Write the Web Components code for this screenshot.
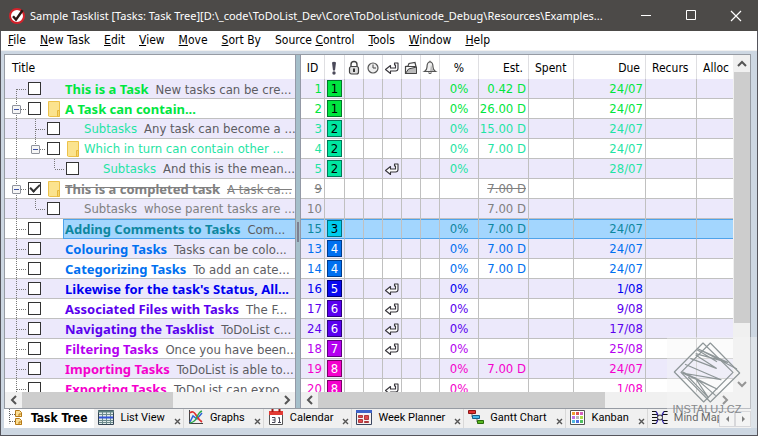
<!DOCTYPE html>
<html lang="en">
<head>
<meta charset="utf-8">
<title>Sample Tasklist</title>
<style>
html, body { margin: 0; height: 100%; overflow: hidden; }
body { font: 13px/19px "DejaVu Sans Condensed", Tahoma, sans-serif; color: #000; }
</style>
</head>
<body>
<app-window>
  <title-bar slot="title">Sample Tasklist [Tasks: Task Tree][D:\_code\ToDoList_Dev\Core\ToDoList\unicode_Debug\Resources\Examples...</title-bar>
  <menu-bar slot="menu"></menu-bar>
  <split-view slot="main">
    <task-tree slot="left"></task-tree>
    <scroll-bar slot="left" size="59"></scroll-bar>
    <task-columns slot="right"></task-columns>
    <scroll-bar slot="right" size="72"></scroll-bar>
    <scroll-bar slot="side" vertical size="83"></scroll-bar>
  </split-view>
  <view-tabs slot="tabs">
    <view-tab icon="tree" active>Task Tree</view-tab>
    <view-tab icon="list">List View</view-tab>
    <view-tab icon="graph">Graphs</view-tab>
    <view-tab icon="calendar">Calendar</view-tab>
    <view-tab icon="week">Week Planner</view-tab>
    <view-tab icon="gantt">Gantt Chart</view-tab>
    <view-tab icon="kanban">Kanban</view-tab>
    <view-tab icon="mind">Mind Map</view-tab>
  </view-tabs>
  <brand-mark slot="mark">INSTALUJ.CZ</brand-mark>
</app-window>

<script>
const COLORS = {
  1: ['#00e640', '#00e640', '#007a2a', '#000'],
  2: ['#1fe4a4', '#00e6a0', '#007a58', '#000'],
  3: ['#0d87a0', '#00ccec', '#00707e', '#000'],
  4: ['#0070f0', '#0070f0', '#003c8c', '#fff'],
  5: ['#0000f0', '#0a0af0', '#000078', '#fff'],
  6: ['#5a00ee', '#5a00f0', '#2c0080', '#fff'],
  7: ['#b400f0', '#b400f0', '#5c0080', '#fff'],
  8: ['#f400cc', '#f400cc', '#7a0068', '#fff'],
  0: ['#808080']
};

/* g: gutter cells. s start, t tee, e expander, v line, l last, x last with expander */
const TASKS = [
  { id: 1, g: 's', p: 1, t: 'This is a Task', c: 'New tasks can be cre...', pc: '0%', est: '0.42 D', due: '24/07' },
  { id: 2, g: 'e', p: 1, t: 'A Task can contain...', c: '', folder: 1, pc: '0%', est: '26.00 D', due: '24/07' },
  { id: 3, g: 'vt', p: 2, t: 'Subtasks', c: 'Any task can become a ...', pc: '0%', est: '15.00 D', due: '24/07' },
  { id: 4, g: 'vx', p: 2, t: 'Which in turn can contain other ...', c: '', folder: 1, pc: '0%', est: '7.00 D', due: '24/07' },
  { id: 5, g: 'v l', p: 2, t: 'Subtasks', c: 'And this is the mean...', ret: 1, pc: '0%', due: '28/07' },
  { id: 9, g: 'e', p: 0, t: 'This is a completed task', c: 'A task ca...', folder: 1, done: 1, est: '7.00 D' },
  { id: 10, g: 'vl', p: 0, t: 'Subtasks', c: 'whose parent tasks are ...', est: '7.00 D' },
  { id: 15, g: 't', p: 3, t: 'Adding Comments to Tasks', c: 'Com...', sel: 1, pc: '0%', est: '7.00 D', due: '24/07' },
  { id: 13, g: 't', p: 4, t: 'Colouring Tasks', c: 'Tasks can be colo...', pc: '0%', est: '7.00 D', due: '24/07' },
  { id: 14, g: 't', p: 4, t: 'Categorizing Tasks', c: 'To add an cate...', pc: '0%', est: '7.00 D', due: '24/07' },
  { id: 16, g: 't', p: 5, t: "Likewise for the task's Status, All...", c: '', ret: 1, pc: '0%', due: '1/08' },
  { id: 17, g: 't', p: 6, t: 'Associated Files with Tasks', c: 'The F...', ret: 1, pc: '0%', due: '9/08' },
  { id: 24, g: 't', p: 6, t: 'Navigating the Tasklist', c: 'ToDoList c...', ret: 1, pc: '0%', due: '17/08' },
  { id: 18, g: 't', p: 7, t: 'Filtering Tasks', c: 'Once you have been...', ret: 1, pc: '0%', due: '25/08' },
  { id: 19, g: 't', p: 8, t: 'Importing Tasks', c: 'ToDoList is able to...', pc: '0%', est: '7.00 D', due: '24/07' },
  { id: 20, g: 't', p: 8, t: 'Exporting Tasks', c: 'ToDoList can expo...', ret: 1, pc: '0%', due: '1/08' }
];

const grid = (n, f) => Array.from({ length: n }, (_, i) => f(i)).join('');
const ICONS = {
  app: `<circle cx="8" cy="8" r="7" fill="#fff" stroke="#d3222b" stroke-width="2"/><path d="M4 8.2l3 3.4 6.6-9.4" fill="none" stroke="#2a1512" stroke-width="2.4"/>`,
  bang: `<path d="M6 2.5q2-1.5 4 0l-1 8H7z" fill="#4b4a5a"/><circle cx="8" cy="13" r="1.7" fill="#4b4a5a"/>`,
  lock: `<path d="M5 7V4.5q0-3 3-3t3 3V7" fill="none" stroke="#444" stroke-width="1.4"/><rect x="3.5" y="6.5" width="9" height="7.5" rx="2" fill="#ddd" stroke="#444" stroke-width="1.2"/><path d="M8 8.5v3.5" stroke="#333" stroke-width="2"/>`,
  clock: `<circle cx="8" cy="8" r="5" fill="#eee" stroke="#555" stroke-width="1.2"/><path d="M8 4.5V8h3" fill="none" stroke="#444"/>`,
  ret: `<path d="M10.500 3h3.500v5.500q0 2.500-2.500 2.500H6.500v2.500L1.500 9.500 6.500 5.500V8H11.500V5H10.500z" fill="#fafafa" stroke="#38363c" stroke-width="1.100" stroke-linejoin="round"/>`,
  folder: `<path d="M2.5 13.5V6.5L5 6l1-2.500 6-1 1 4v7z" fill="#fafafa" stroke="#444" stroke-width="1.2"/><path d="M2.5 13.5l3-4.5 8-2v6.5z" fill="#bbb" stroke="#444"/><path d="M3 6.5h10" stroke="#444"/>`,
  bell: `<path d="M8 2q3 0 3 5 0 3 2.500 4.500h-11Q5 10 5 7q0-5 3-5z" fill="#f0f0f0" stroke="#555" stroke-width="1.2"/><path d="M9 4.500q1 4 3 6.500H8z" fill="#bbb"/><path d="M6.5 12.5q1.500 2 3 0M8 2V.8" fill="none" stroke="#555" stroke-width="1.2"/>`,
  note: `<path d="M1.500.5h11V10l-.5 2v3.500H2.500L1.500 15z" fill="#fbe38e" stroke="#edc24a"/><path d="M10.500 15.500V9.500h2v6z" fill="#f8d66a" stroke="#e6b93c"/>`,
  tree: `<path d="M.5 0v14.500M1 5.500h5M1 12.500h5" stroke="#666" stroke-dasharray="1 1"/><g fill="#fcdf94" stroke="#b67a18"><path d="M6.500 1.500h4l2 2v4h-6z"/><path d="M6.500 9.500h4l2 2v4h-6z"/><path d="M10 5h2.500v2.500H10zM10 13h2.500v2.500H10z"/></g>`,
  list: `<path d="M.5 1.500h15v14H.5z" fill="#dfeaea" stroke="#345"/><path d="M0 2.500h16" stroke="#5a8080" stroke-width="2"/><path d="M1 5.500h14M1 11.500h14M1 13.500h14M4.500 3v12M8.500 3v12M12.500 3v12" stroke="#6d8a8c"/><path d="M1 8.500h14" stroke="#3355d8" stroke-width="2"/>`,
  graph: `<path d="M1.500 1v13.500H15" fill="none" stroke="#444"/><path d="M2 13L5 7l4 3 5-6" fill="none" stroke="#2c63d8" stroke-width="1.500"/><path d="M2 4q3-3 6 2t6 7" fill="none" stroke="#e03030" stroke-width="1.700"/><path d="M2 14q5-1 7-6t5-6" fill="none" stroke="#2fa84c" stroke-width="1.400"/>`,
  calendar: `<path d="M1.500 2.500h13v13h-13z" fill="#fff" stroke="#555"/><path d="M1 2h14v4H1z" fill="#e23a34"/><path d="M4.500 0v3M11.500 0v3" stroke="#a01814" stroke-width="2"/><path d="M4 8.500h3v5H4M4.500 11H7M10 9l1.500-.5v5M10 13.500h3" fill="none" stroke="#445"/>`,
  week: `<path d="M.5 1.500h15v14H.5z" fill="#f6f2f2" stroke="#3a4660"/><path d="M0 1h16v3H0z" fill="#3e62c8"/><g fill="#e0484c" stroke="#9c2026" stroke-width=".8"><path d="M2.500 6.500h4v2h-4zM8.500 6.500h4v4h-4zM2.500 10.500h4v3h-4zM8.500 12.500h4v1h-4z"/></g>`,
  gantt: `<path d="M4 4v4h3M9 9v4h3" fill="none" stroke="#666"/><path d="M.5 1.500h7v3h-7z" fill="#e03030" stroke="#8c1414"/><path d="M4.500 6.500h7v3h-7z" fill="#48b8ea" stroke="#14608c"/><path d="M9.500 11.500h6v3h-6z" fill="#58b820" stroke="#2a6c0c"/>`,
  kanban: `<path d="M.5 1.500h14v14H.5z" fill="#fff" stroke="#555"/>` + grid(9, i => `<rect x="${2 + i % 3 * 4}" y="${3 + (i / 3 | 0) * 4}" width="3" height="3" fill="${['#f0a030', '#e05050', '#d860c0', '#c070e0', '#b8b8b8', '#b0dc50', '#50b8e0', '#5070e0', '#50c060'][i]}"/>`),
  mind: `<path d="M0 2.500h4M0 5.500h5M0 8.500h5M0 11.500h5M0 14.500h4M12 2.500h4M11 5.500h5M11 11.500h5M12 14.500h4" stroke="#111"/><path d="M4 2.500q2 2 2 6t-2 6M12 2.500q-2 2-2 6t2 6" fill="none" stroke="#3426a0" stroke-width="1.300"/><circle cx="8" cy="8.500" r="2.500" fill="#eee" stroke="#333"/>`,
  min: `<path d="M3 7.500h10" stroke="#fff"/>`,
  max: `<path d="M3.500 2.500h9v9h-9z" fill="none" stroke="#fff" stroke-width="1"/>`,
  close: `<path d="M3 3l10 10M13 3L3 13" stroke="#fff" stroke-width="1.200"/>`,
  cross: `<path d="M5 8l5 5M10 8l-5 5" stroke="#555" stroke-width="1.400"/>`,
  left: `<path d="M10 4L6 8l4 4" fill="none" stroke="#555" stroke-width="2"/>`,
  right: `<path d="M6 4l4 4-4 4" fill="none" stroke="#555" stroke-width="2"/>`,
  up: `<path d="M4 10l4-4 4 4" fill="none" stroke="#555" stroke-width="2"/>`,
  down: `<path d="M4 6l4 4 4-4" fill="none" stroke="#555" stroke-width="2"/>`,
  prev: `<path d="M9 4v6L6 7z" fill="#333"/>`,
  next: `<path d="M6 4l3 3-3 3z" fill="#333"/>`
};
const svg = name => `<svg width="16" height="16" viewBox="0 0 16 16" aria-hidden="true">${ICONS[name]}</svg>`;

const define = (name, render) => customElements.define(name, class extends HTMLElement {
  connectedCallback() {
    if (!this.shadowRoot) this.attachShadow({ mode: 'open' }).innerHTML = render(this);
  }
});

const RESET = `:host,*{box-sizing:border-box} svg{display:block;flex:none} button{appearance:none;border:0;margin:0;padding:0;background:none;font:inherit;color:inherit}`;

define('app-window', () => `<style>${RESET}
  :host{display:flex;flex-direction:column;height:100vh;position:relative;background:#cdd7e2;
    border:solid #55555c;border-width:0 1px 1px}
  main{flex:1 1 0;min-height:0;display:flex;flex-direction:column;padding:3px 6px 7px 3px}
  ::slotted([slot=main]){flex:1 1 0;min-height:0}
</style>
<slot name="title"></slot><slot name="menu"></slot>
<main><slot name="main"></slot><slot name="tabs"></slot></main><slot name="mark"></slot>`);

define('title-bar', () => `<style>${RESET}
  :host{display:flex;flex:none;height:31px;align-items:center;background:#4c4a48;color:#fff;
    margin:0 -1px;padding-left:9px;font:11px/31px "Noto Sans","Segoe UI",sans-serif}
  h1{flex:1;min-width:0;margin:0 0 0 5px;font:inherit;white-space:nowrap;overflow:hidden}
  button{width:45px;height:31px;display:grid;place-items:center}
</style>${svg('app')}<h1><slot></slot></h1>
<button aria-label="Minimize">${svg('min')}</button><button aria-label="Maximize">${svg('max')}</button><button aria-label="Close">${svg('close')}</button>`);

define('menu-bar', () => `<style>${RESET}
  :host{display:flex;flex:none;height:20px;background:#fff;border-bottom:1px solid #f0f0f0;font-size:12px}
  button{padding:0 7px;line-height:19px;white-space:nowrap}
</style>` + ['_File', '_New Task', '_Edit', '_View', '_Move', '_Sort By', 'Source _Control', '_Tools', '_Window', '_Help']
  .map(t => `<button>${t.replace(/_(.)/, '<u>$1</u>')}</button>`).join(''));

define('split-view', () => `<style>${RESET}
  :host{display:flex;border:1px solid #969ba3;background:#fff}
  .pane{display:flex;flex-direction:column;min-width:0;min-height:0}
  .left{flex:290 1 0}
  .right{flex:432 1 0}
  .bar{flex:none;width:6px;background:#a5bfca;border:solid #9499a6;border-width:0 1px;display:grid;place-items:center}
  .bar i{width:2px;height:20px;background:#7c8092}
  .side{flex:none;width:17px;padding:0 0 16px 1px;display:flex;flex-direction:column;background:#f0f0f0}
  ::slotted(task-tree),::slotted(task-columns){flex:1 1 0;min-height:0;overflow:hidden}
  ::slotted([slot=side]){flex:1}
</style>
<div class="pane left"><slot name="left"></slot></div>
<div class="bar"><i></i></div>
<div class="pane right"><slot name="right"></slot></div>
<div class="side"><slot name="side"></slot></div>`);

define('scroll-bar', el => {
  const v = el.hasAttribute('vertical');
  return `<style>${RESET}
  :host{display:flex;flex:none;flex-direction:${v ? 'column' : 'row'};background:#f0f0f0;${v ? 'width' : 'height'}:16px}
  button{flex:none;width:${v ? 16 : 17}px;height:${v ? 17 : 16}px;display:grid;place-items:center}
  .track{flex:1;display:flex;flex-direction:${v ? 'column' : 'row'}}
  .thumb{flex:0 0 ${el.getAttribute('size')}%;background:#cdcdcd}
</style><button aria-label="Scroll back">${svg(v ? 'up' : 'left')}</button><div class="track"><div class="thumb"></div></div><button aria-label="Scroll forward">${svg(v ? 'down' : 'right')}</button>`;
});

define('tree-gutter', el => {
  const c = el.getAttribute('kind');
  const ex = c === 'e' || c === 'x';
  const y = { s: [10, 20], t: [0, 20], e: [0, 20], v: [0, 20], l: [0, 10], x: [0, 10] }[c];
  return `<style>${RESET}
  :host{display:grid;flex:none;width:19px;height:20px}
  svg,button{grid-area:1/1}
  button{width:9px;height:9px;margin:6px 0 0 5px;border:1px solid #8f939c;border-radius:1px;background:#f6f6f6;display:grid;place-items:center}
  button i{width:5px;height:1px;background:#3a50a8}
</style><svg width="19" height="20" viewBox="0 0 19 20" fill="none" stroke="#777" stroke-dasharray="1 1">${y ? `<path d="M9.500 ${y[0]}V${y[1]}"/>` : ''}${y && c !== 'v' ? '<path d="M10 10.500h9"/>' : ''}</svg>${ex ? '<button aria-label="Collapse"><i></i></button>' : ''}`;
});

define('tree-row', el => {
  const t = TASKS[el.dataset.index];
  const lead = t.g.length === 1;
  return `<style>${RESET}
  :host{display:flex;height:20px;padding-left:2px;background:${el.dataset.index % 2 ? '#fff' : '#ece9fb'};
    border-bottom:1px solid #c0c0c0;white-space:nowrap;line-height:20px}
  input{appearance:none;flex:none;width:13px;height:13px;margin:3px 0 0 2px;border:1px solid #333;background:#fff;display:grid;place-items:center}
  input:checked::after{content:"";width:8px;height:4px;margin-top:-3px;border:solid #333;border-width:0 0 2px 2px;transform:rotate(-45deg)}
  .icon{flex:none;width:22px;padding:2px 0 0 6px;overflow:hidden}
  label{flex:1;min-width:0;height:20px;overflow:hidden;padding-left:2px;color:${COLORS[t.p][0]};${t.done ? 'text-decoration:line-through;' : ''}}
  label.sel{background:#a3d6fe;border:solid #4ea3ea;border-width:1px 0 1px 1px;padding-left:1px;line-height:18px}
  b{font-family:"Noto Sans",Tahoma,sans-serif}
  span{margin-left:7px;color:${t.p ? '#5c5c62' : '#808080'}}
</style>
${[...t.g].map(c => `<tree-gutter kind="${c}"></tree-gutter>`).join('')}
<input type="checkbox" id="c"${t.done ? ' checked' : ''}><div class="icon">${t.folder ? svg('note') : ''}</div>
<label for="c"${t.sel ? ' class="sel"' : ''}>${lead ? `<b>${t.t}</b>` : t.t}${t.c ? `<span>${t.c}</span>` : ''}</label>`;
});

define('task-tree', () => `<style>${RESET}
  :host{display:block}
  header{height:24px;padding-left:7px;line-height:26px;font-size:12px}
</style><header>Title</header>` + TASKS.map((t, i) => `<tree-row data-index="${i}"></tree-row>`).join(''));

define('task-columns', () => {
  const cols = [24, 20, 19, 19, 19, 19, 19, 39, 50, 45, 72, 51];
  const head = [['ID', 'c'], [svg('bang'), 'i', 'Priority'], [svg('lock'), 'i', 'Lock'], [svg('clock'), 'i', 'Time'], [svg('ret'), 'i', 'Dependency'], [svg('folder'), 'i', 'File'], [svg('bell'), 'i', 'Reminder'],
    ['%', 'c'], ['Est.', 'r'], ['Spent', ''], ['Due', 'r'], ['Recurs', ''], ['Alloc', '']];
  const row = (t, i) => {
    const c = COLORS[t.p];
    const pri = t.p ? `<span class="pri" style="background:${c[1]};border-color:${c[2]};color:${c[3]}">${t.p}</span>` : '';
    return `<tr class="${i % 2 ? '' : 'alt'}${t.sel ? ' sel' : ''}${t.done ? ' done' : ''}" style="color:${c[0]}"><td class="r">${t.id}</td><td>${pri}</td><td></td><td></td><td class="i">${t.ret ? svg('ret') : ''}</td><td></td><td></td><td class="c">${t.pc || ''}</td><td class="r">${t.est || ''}</td><td></td><td class="r">${t.due || ''}</td><td></td><td></td></tr>`;
  };
  return `<style>${RESET}
  :host{display:block}
  table{width:100%;table-layout:fixed;border-collapse:separate;border-spacing:0}
  th{height:24px;padding:2px 0 0 6px;font-weight:normal;font-size:12px;line-height:20px;text-align:left;border-right:1px solid #dfdfe2;white-space:nowrap;overflow:hidden}
  td{height:20px;padding:0;line-height:19px;border:solid #c0c0c0;border-width:0 1px 1px 0;white-space:nowrap;overflow:hidden}
  th:last-child,td:last-child{border-right:0}
  .alt{background:#ece9fb}
  .c{text-align:center;padding-left:0}
  td.r{text-align:right;padding-right:2px}
  th.r{text-align:right;padding:2px 5px 0 0}
  th.i{padding-left:1px}
  td.i{padding-left:1px}
  .sel{background:#a3d6fe}
  .sel td{border-bottom-color:#4ea3ea;box-shadow:inset 0 1px #4ea3ea}
  .done td{text-decoration:line-through}
  .pri{display:block;width:15px;height:17px;margin-left:2px;border:1px solid;text-align:center;line-height:15px}
</style><table><colgroup>${cols.map(w => `<col style="width:${w}px">`).join('')}<col></colgroup>
<thead><tr>${head.map(h => `<th class="${h[1]}"${h[2] ? ` aria-label="${h[2]}"` : ''}>${h[0]}</th>`).join('')}</tr></thead><tbody>${TASKS.map(row).join('')}</tbody></table>`;
});

define('view-tabs', () => `<style>${RESET}
  :host{display:flex;flex:none;height:19px;background:#f0f0f0}
  nav{flex:1;min-width:0;display:flex;overflow:hidden}
  button{width:16px;height:16px;margin-top:2px;border:1px solid #c4c4c8;background:#f4f4f4;overflow:hidden}
</style><nav><slot></slot></nav><button aria-label="Previous tabs">${svg('prev')}</button><button aria-label="Next tabs">${svg('next')}</button>`);

define('view-tab', el => {
  const on = el.hasAttribute('active');
  return `<style>${RESET}
  :host{display:flex;flex:none;height:19px;white-space:nowrap;
    ${on ? 'background:#fff;font-weight:bold;font-size:12px;padding-right:7px' : 'border-right:1px solid #d8d8d8;font-size:11px;font-family:Roboto,"Segoe UI",sans-serif'}}
  .tab{display:flex;gap:6px;padding-left:${on ? 5 : 4}px;line-height:${on ? 19 : 17}px}
  .x{margin-left:5px;width:13px;overflow:hidden}
</style><button class="tab">${svg(el.getAttribute('icon'))}<slot></slot></button>${on ? '' : `<button class="x" aria-label="Close tab">${svg('cross')}</button>`}`;
});

define('brand-mark', () => `<style>${RESET}
  :host{position:absolute;right:0;bottom:7px;width:90px;height:91px;display:flex;flex-direction:column;align-items:center;
    padding:4px 10px 0 0;background:rgba(244,244,244,.4);pointer-events:none;
    color:#85888c;font:11px/12px "Liberation Sans",Arial,sans-serif}
</style><svg width="68" height="62" viewBox="40 34 204 186" fill="none" stroke="#8e9698" stroke-width="3.500" stroke-linejoin="round">
<path d="M130 40L44 127l88 90 88-89zM152 40l88 90-88 87-88-89z"/>
<path d="M108 72l96 26-88-40 116 60M92 86l78 30-62-40M76 104l108 46-116-20 104 48-104-52M86 142l60 62-40-60 62 54M112 60l60 36"/>
</svg><slot></slot>`);
</script>
</body>
</html>
